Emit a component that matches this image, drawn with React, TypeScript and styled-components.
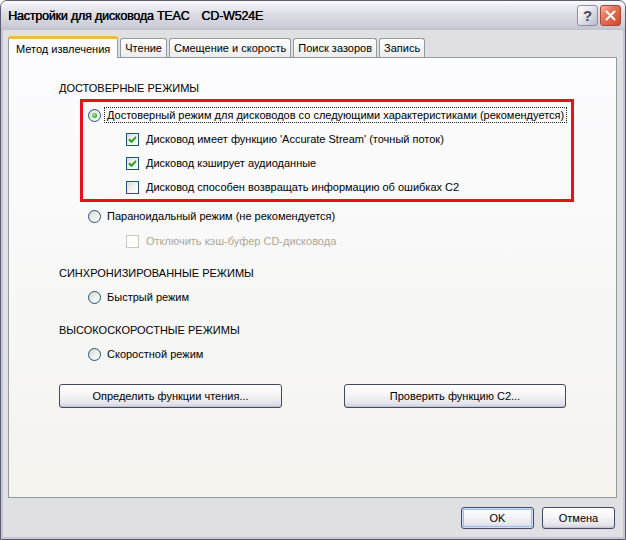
import React from "react";
import styled, { createGlobalStyle } from "styled-components";

const Global = createGlobalStyle`
  html, body { margin: 0; padding: 0; background: #ffffff; }
  body { font-family: "Liberation Sans", Arial, sans-serif; }
  * { box-sizing: border-box; }
`;

const Window = styled.div`
  width: 626px;
  height: 540px;
  display: flex;
  flex-direction: column;
  background: #c4c4d2;
  border: 1px solid #5c5c70;
  border-radius: 7px 7px 0 0;
  overflow: hidden;
`;

const TitleBar = styled.div`
  height: 29px;
  flex: none;
  display: flex;
  align-items: center;
  justify-content: space-between;
  padding: 0 4px 0 7px;
  background: linear-gradient(#fdfdfe 0%, #eeeef3 15%, #dcdce4 45%, #d0d0da 80%, #c2c2ce 100%);
`;

const Title = styled.span`
  display: flex;
  gap: 12px;
  font-family: "Liberation Sans", Arial, sans-serif;
  font-size: 12.5px;
  font-weight: normal;
  letter-spacing: -0.2px;
  color: #000;
  text-shadow: 0.4px 0 0 #000;
  white-space: nowrap;
`;

const TitleButtons = styled.div`
  display: flex;
  gap: 2px;
  align-items: center;
`;

const CaptionButton = styled.div<{ $close?: boolean }>`
  width: 21px;
  height: 21px;
  border-radius: 3px;
  display: flex;
  align-items: center;
  justify-content: center;
  border: 1px solid ${(p) => (p.$close ? "#a64a36" : "#8d8da6")};
  background: ${(p) =>
    p.$close
      ? "linear-gradient(135deg, #f2b8a4 0%, #e4735a 40%, #d0452a 100%)"
      : "linear-gradient(135deg, #ffffff 0%, #e2e2ea 50%, #b8b8c8 100%)"};
  color: #4a4a5a;
  font-size: 15px;
  font-weight: bold;
  font-family: "Liberation Sans", Arial, sans-serif;
`;

const Client = styled.div`
  flex: 1;
  margin: 0 2px 2px;
  background: #e0dfe3;
  padding: 6px 6px 0 5px;
  display: flex;
  flex-direction: column;
`;

const TabRow = styled.div`
  display: flex;
  align-items: flex-end;
  height: 21px;
  gap: 2px;
  position: relative;
  z-index: 1;
`;

const Tab = styled.div<{ $active?: boolean }>`
  height: ${(p) => (p.$active ? "22px" : "19px")};
  margin-bottom: ${(p) => (p.$active ? "-1px" : "0")};
  padding: 0 ${(p) => (p.$active ? "7px" : "4px")};
  display: flex;
  align-items: center;
  font-size: 11px;
  color: #000;
  border: 1px solid #919b9c;
  border-bottom: none;
  border-radius: 3px 3px 0 0;
  border-top: ${(p) => (p.$active ? "3px solid #f6b83a" : "1px solid #919b9c")};
  background: ${(p) => (p.$active ? "#fcfcfe" : "linear-gradient(#ffffff, #ecebef)")};
  white-space: nowrap;
`;

const Panel = styled.div`
  height: 441px;
  flex: none;
  border: 1px solid #919b9c;
  background: linear-gradient(#fcfcfe 0%, #f7f7f6 60%, #f4f3ee 100%);
  padding: 20px 0 0 50px;
  display: flex;
  flex-direction: column;
  align-items: flex-start;
`;

const Heading = styled.div<{ $mt?: number }>`
  height: 20px;
  margin-top: ${(p) => p.$mt ?? 0}px;
  display: flex;
  align-items: center;
  font-size: 11px;
  color: #000;
`;

const Highlight = styled.div`
  width: 494px;
  margin: 1px 0 0 21px;
  border: 3px solid #e8101a;
  padding: 1px 0 0 5px;
  display: flex;
  flex-direction: column;
`;

const Option = styled.div<{ $indent?: number; $mt?: number }>`
  height: 24px;
  margin-top: ${(p) => p.$mt ?? 0}px;
  padding-left: ${(p) => p.$indent ?? 0}px;
  display: flex;
  align-items: center;
  font-size: 11px;
  color: #000;
  white-space: nowrap;
`;

const Label = styled.span<{ $disabled?: boolean; $focus?: boolean; $gap: number }>`
  margin-left: ${(p) => p.$gap}px;
  color: ${(p) => (p.$disabled ? "#aca899" : "#000")};
  border: 1px ${(p) => (p.$focus ? "dotted #222" : "solid transparent")};
  padding: 1px 2px 1px 2px;
`;

const CheckBox = styled.span<{ $disabled?: boolean }>`
  width: 13px;
  height: 13px;
  flex: none;
  display: flex;
  align-items: center;
  justify-content: center;
  border: 1px solid ${(p) => (p.$disabled ? "#cac8bb" : "#1c5180")};
  background: ${(p) =>
    p.$disabled ? "#fdfdfb" : "linear-gradient(135deg, #dcdcd7 0%, #f4f4f0 60%, #ffffff 100%)"};
`;

const Radio = styled.span`
  width: 13px;
  height: 13px;
  flex: none;
  border-radius: 50%;
  display: flex;
  align-items: center;
  justify-content: center;
  border: 1px solid #1c5180;
  background: linear-gradient(135deg, #d6d6d0 0%, #f2f2ee 60%, #ffffff 100%);
`;

const RadioDot = styled.span`
  width: 5px;
  height: 5px;
  border-radius: 50%;
  background: radial-gradient(circle at 40% 40%, #a8e6a0 0%, #2fb02a 70%, #1c8a1c 100%);
`;

const ButtonRow = styled.div`
  margin-top: 18px;
  display: flex;
  gap: 62px;
`;

const Button = styled.div<{ $w: number; $h: number; $default?: boolean }>`
  width: ${(p) => p.$w}px;
  height: ${(p) => p.$h}px;
  display: flex;
  align-items: center;
  justify-content: center;
  font-size: 11px;
  color: #000;
  border: 1px solid #3d4a6a;
  border-radius: 3px;
  background: linear-gradient(#ffffff 0%, #f6f6f8 40%, #e6e6ec 80%, #d2d2dc 100%);
  box-shadow: ${(p) =>
    p.$default ? "inset 0 0 0 1px #cee0fa, inset 0 0 0 2px #9cbcec" : "inset 0 -1px 0 #c4c4d0"};
`;

const Footer = styled.div`
  margin-top: 9px;
  padding-right: 2px;
  display: flex;
  justify-content: flex-end;
  gap: 8px;
`;

const Check = () => (
  <svg width="9" height="9" viewBox="0 0 9 9">
    <path d="M1 4.2 L3.5 6.8 L8 1.8" fill="none" stroke="#21a121" strokeWidth="2" />
  </svg>
);

const CloseX = () => (
  <svg width="11" height="11" viewBox="0 0 11 11">
    <path d="M1.5 1.5 L9.5 9.5 M9.5 1.5 L1.5 9.5" stroke="#ffffff" strokeWidth="2" strokeLinecap="round" />
  </svg>
);

export default function App() {
  return (
    <>
      <Global />
      <Window>
        <TitleBar>
          <Title>
            <span>Настройки для дисковода TEAC</span>
            <span>CD-W524E</span>
          </Title>
          <TitleButtons>
            <CaptionButton>?</CaptionButton>
            <CaptionButton $close>
              <CloseX />
            </CaptionButton>
          </TitleButtons>
        </TitleBar>
        <Client>
          <TabRow>
            <Tab $active>Метод извлечения</Tab>
            <Tab>Чтение</Tab>
            <Tab>Смещение и скорость</Tab>
            <Tab>Поиск зазоров</Tab>
            <Tab>Запись</Tab>
          </TabRow>
          <Panel>
            <Heading>ДОСТОВЕРНЫЕ РЕЖИМЫ</Heading>
            <Highlight>
              <Option>
                <Radio>
                  <RadioDot />
                </Radio>
                <Label $gap={3} $focus>
                  Достоверный режим для дисководов со следующими характеристиками (рекомендуется)
                </Label>
              </Option>
              <Option $indent={38}>
                <CheckBox>
                  <Check />
                </CheckBox>
                <Label $gap={4}>Дисковод имеет функцию 'Accurate Stream' (точный поток)</Label>
              </Option>
              <Option $indent={38}>
                <CheckBox>
                  <Check />
                </CheckBox>
                <Label $gap={4}>Дисковод кэширует аудиоданные</Label>
              </Option>
              <Option $indent={38}>
                <CheckBox />
                <Label $gap={4}>Дисковод способен возвращать информацию об ошибках C2</Label>
              </Option>
            </Highlight>
            <Option $indent={29} $mt={2}>
              <Radio />
              <Label $gap={3}>Параноидальный режим (не рекомендуется)</Label>
            </Option>
            <Option $indent={67} $mt={1}>
              <CheckBox $disabled />
              <Label $gap={4} $disabled>
                Отключить кэш-буфер CD-дисковода
              </Label>
            </Option>
            <Heading $mt={10}>СИНХРОНИЗИРОВАННЫЕ РЕЖИМЫ</Heading>
            <Option $indent={29} $mt={2}>
              <Radio />
              <Label $gap={3}>Быстрый режим</Label>
            </Option>
            <Heading $mt={11}>ВЫСОКОСКОРОСТНЫЕ РЕЖИМЫ</Heading>
            <Option $indent={29} $mt={2}>
              <Radio />
              <Label $gap={3}>Скоростной режим</Label>
            </Option>
            <ButtonRow>
              <Button $w={223} $h={24}>Определить функции чтения...</Button>
              <Button $w={222} $h={24}>Проверить функцию C2...</Button>
            </ButtonRow>
          </Panel>
          <Footer>
            <Button $w={73} $h={22} $default>
              OK
            </Button>
            <Button $w={73} $h={22}>
              Отмена
            </Button>
          </Footer>
        </Client>
      </Window>
    </>
  );
}
